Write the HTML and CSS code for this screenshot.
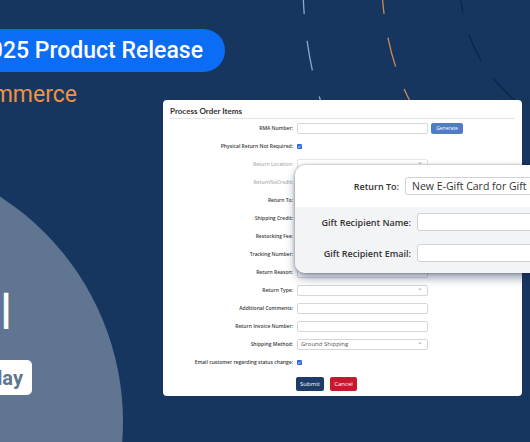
FILE: index.html
```html
<!DOCTYPE html>
<html>
<head>
<meta charset="utf-8">
<link rel="stylesheet" href="styles.css">
</head>
<body>
<div class="banner">
  <div class="circle"></div>
  <svg class="arcs" width="270" height="120" viewBox="260 0 270 120">
    <path class="arc arc-light" d="M303,-10 C304,30 310,70 322,105"/>
    <path class="arc arc-orange" d="M382,-10 C384,30 393,70 412,105"/>
    <path class="arc arc-dark" d="M460,-10 C462,30 480,80 535,115"/>
  </svg>
  <div class="left">
    <div class="pill"><span>2025 Product Release</span></div>
    <div class="sub"><span>Ecommerce</span></div>
    <div class="big"><span>Virtual</span></div>
    <div class="cta"><span>Register Today</span></div>
  </div>
  <div class="card">
    <div class="card-title">Process Order Items</div>
    <div class="rows">
      <div class="lbl">RMA Number:</div>
      <div class="ctl"><span class="input"></span><span class="btn btn-gen">Generate</span></div>

      <div class="lbl">Physical Return Not Required:</div>
      <div class="ctl"><span class="check"><svg viewBox="0 0 6 6" width="5" height="5"><path d="M1.3 3.1 L2.5 4.2 L4.7 1.8" fill="none" stroke="#fff" stroke-width="0.9"/></svg></span></div>

      <div class="lbl muted">Return Location:</div>
      <div class="ctl"><span class="input select muted-input"><span class="chev">&#8964;</span></span></div>

      <div class="lbl muted">ReturnNoCredit:</div>
      <div class="ctl"><span class="input muted-input"></span></div>

      <div class="lbl">Return To:</div>
      <div class="ctl"><span class="input select"><span class="chev">&#8964;</span></span></div>

      <div class="lbl">Shipping Credit:</div>
      <div class="ctl"><span class="input"></span></div>

      <div class="lbl">Restocking Fee:</div>
      <div class="ctl"><span class="input"></span></div>

      <div class="lbl">Tracking Number:</div>
      <div class="ctl"><span class="input"></span></div>

      <div class="lbl">Return Reason:</div>
      <div class="ctl"><span class="input select"><span class="chev">&#8964;</span></span></div>

      <div class="lbl">Return Type:</div>
      <div class="ctl"><span class="input select"><span class="chev">&#8964;</span></span></div>

      <div class="lbl">Additional Comments:</div>
      <div class="ctl"><span class="input"></span></div>

      <div class="lbl">Return Invoice Number:</div>
      <div class="ctl"><span class="input"></span></div>

      <div class="lbl">Shipping Method:</div>
      <div class="ctl"><span class="input select"><span class="val">Ground Shipping</span><span class="chev">&#8964;</span></span></div>

      <div class="lbl">Email customer regarding status change:</div>
      <div class="ctl"><span class="check"><svg viewBox="0 0 6 6" width="5" height="5"><path d="M1.3 3.1 L2.5 4.2 L4.7 1.8" fill="none" stroke="#fff" stroke-width="0.9"/></svg></span></div>
    </div>
    <div class="actions">
      <span class="btn btn-submit">Submit</span>
      <span class="btn btn-cancel">Cancel</span>
    </div>

    <div class="popup">
      <div class="pop-top">
        <div class="plbl">Return To:</div>
        <div class="pinput"><span>New E-Gift Card for Gift Recipient</span></div>
      </div>
      <div class="pop-bottom">
        <div class="plbl">Gift Recipient Name:</div>
        <div class="pinput"></div>
        <div class="plbl">Gift Recipient Email:</div>
        <div class="pinput"></div>
      </div>
    </div>
  </div>
</div>
</body>
</html>
```

FILE: styles.css
```css
html, body {
  margin: 0;
  padding: 0;
}
body {
  width: 530px;
  height: 442px;
  overflow: hidden;
  font-family: "Open Sans", "Liberation Sans", sans-serif;
}
.banner {
  position: relative;
  width: 530px;
  height: 442px;
  overflow: hidden;
  background: #17365f;
  display: flex;
  align-items: flex-start;
}
.circle {
  position: absolute;
  left: -413px;
  top: 154px;
  width: 536px;
  height: 536px;
  border-radius: 50%;
  background: #5f7592;
  z-index: 0;
}
.arcs {
  position: absolute;
  left: 260px;
  top: 0;
  z-index: 0;
}
.arc {
  fill: none;
  stroke-width: 1.3;
}
.arc-light {
  stroke: #8ea7ca;
  stroke-dasharray: 30 27;
  stroke-dashoffset: 6;
}
.arc-orange {
  stroke: #c98a52;
  stroke-dasharray: 30 24;
  stroke-dashoffset: 6;
}
.arc-dark {
  stroke: #0c2546;
  stroke-dasharray: 30 22;
  stroke-dashoffset: 7;
}
.left {
  position: relative;
  z-index: 1;
  width: 163px;
  flex-shrink: 0;
  display: flex;
  flex-direction: column;
  align-items: flex-start;
}
.pill {
  margin-top: 29px;
  width: 225px;
  height: 43px;
  flex-shrink: 0;
  box-sizing: border-box;
  padding-right: 22px;
  border-radius: 0 22px 22px 0;
  background: #0b6cf6;
  color: #fff;
  display: flex;
  align-items: center;
  justify-content: flex-end;
  white-space: nowrap;
  font-family: Roboto, "Liberation Sans", sans-serif;
  font-weight: 500;
  font-size: 23px;
}
.sub {
  margin-top: 11px;
  width: 77px;
  height: 24px;
  display: flex;
  justify-content: flex-end;
  white-space: nowrap;
  color: #ee9243;
  font-family: Roboto, "Liberation Sans", sans-serif;
  font-size: 23px;
  line-height: 24px;
}
.big {
  margin-top: 182px;
  width: 12px;
  height: 48px;
  display: flex;
  justify-content: flex-end;
  white-space: nowrap;
  color: #fff;
  font-family: Roboto, "Liberation Sans", sans-serif;
  font-size: 48px;
  line-height: 48px;
}
.cta {
  margin-top: 23px;
  width: 32px;
  height: 35px;
  box-sizing: border-box;
  padding-right: 9px;
  border-radius: 0 5px 5px 0;
  background: #fff;
  color: #5f7592;
  display: flex;
  align-items: center;
  justify-content: flex-end;
  white-space: nowrap;
  font-family: Roboto, "Liberation Sans", sans-serif;
  font-weight: 700;
  font-size: 20px;
}
.card {
  position: relative;
  z-index: 2;
  margin-top: 100px;
  width: 359px;
  height: 296px;
  flex-shrink: 0;
  box-sizing: border-box;
  padding: 0 7px;
  background: #fff;
  border-radius: 4px;
}
.card-title {
  padding-top: 6px;
  padding-bottom: 2px;
  line-height: 10px;
  border-bottom: 1px solid #e4e4e4;
  font-family: Lato, "Open Sans", sans-serif;
  font-weight: 700;
  font-size: 8px;
  color: #333;
}
.rows {
  display: grid;
  grid-template-columns: 123px 1fr;
  column-gap: 4px;
  grid-auto-rows: 18px;
  align-items: center;
}
.lbl {
  text-align: right;
  white-space: nowrap;
  font-size: 5px;
  font-weight: 600;
  color: #3a3a3a;
}
.lbl.muted {
  color: #b0b0b0;
}
.ctl {
  display: flex;
  align-items: center;
  gap: 3px;
}
.input {
  position: relative;
  display: flex;
  align-items: center;
  box-sizing: border-box;
  width: 131px;
  height: 11px;
  border: 1px solid #d6d6d6;
  border-radius: 2px;
  background: #fff;
}
.muted-input {
  border-color: #e6e6e6;
}
.val {
  padding-left: 3px;
  font-size: 6px;
  color: #555;
}
.chev {
  position: absolute;
  right: 4px;
  top: -3px;
  font-size: 7px;
  color: #999;
}
.btn {
  display: inline-flex;
  align-items: center;
  justify-content: center;
  box-sizing: border-box;
  border-radius: 2px;
  color: #fff;
  font-size: 5px;
}
.btn-gen {
  width: 32px;
  height: 11px;
  background: #4f7dc0;
}
.check {
  display: inline-flex;
  align-items: center;
  justify-content: center;
  width: 5px;
  height: 5px;
  border-radius: 1px;
  background: #2e68df;
}
.actions {
  margin-top: 6px;
  padding-left: 126px;
  display: flex;
  gap: 6px;
}
.btn-submit {
  width: 28px;
  height: 14px;
  background: #1c3b66;
  font-size: 6px;
}
.btn-cancel {
  width: 27px;
  height: 14px;
  background: #c41a30;
  font-size: 6px;
}
.popup {
  position: absolute;
  left: 132px;
  top: 65px;
  width: 250px;
  height: 108px;
  border-radius: 10px;
  overflow: hidden;
  background: #fff;
  box-shadow: 0 0 3px rgba(0, 0, 0, 0.35), 0 5px 10px rgba(20, 40, 80, 0.45);
}
.pop-top {
  height: 42px;
  box-sizing: border-box;
  padding-top: 12px;
  display: grid;
  grid-template-columns: 104px 1fr;
  column-gap: 6px;
  grid-auto-rows: 18px;
  align-items: center;
}
.pop-bottom {
  height: 66px;
  box-sizing: border-box;
  padding-top: 6px;
  background: #f3f4f6;
  display: grid;
  grid-template-columns: 116px 1fr;
  column-gap: 6px;
  row-gap: 13px;
  grid-auto-rows: 18px;
  align-items: center;
}
.plbl {
  text-align: right;
  white-space: nowrap;
  font-size: 9px;
  font-weight: 600;
  color: #333;
}
.pinput {
  height: 18px;
  box-sizing: border-box;
  border: 1px solid #cfd2d6;
  border-radius: 3px;
  background: #fff;
  display: flex;
  align-items: center;
  padding-left: 6px;
  white-space: nowrap;
  overflow: hidden;
  font-size: 10.5px;
  color: #333;
}
```
